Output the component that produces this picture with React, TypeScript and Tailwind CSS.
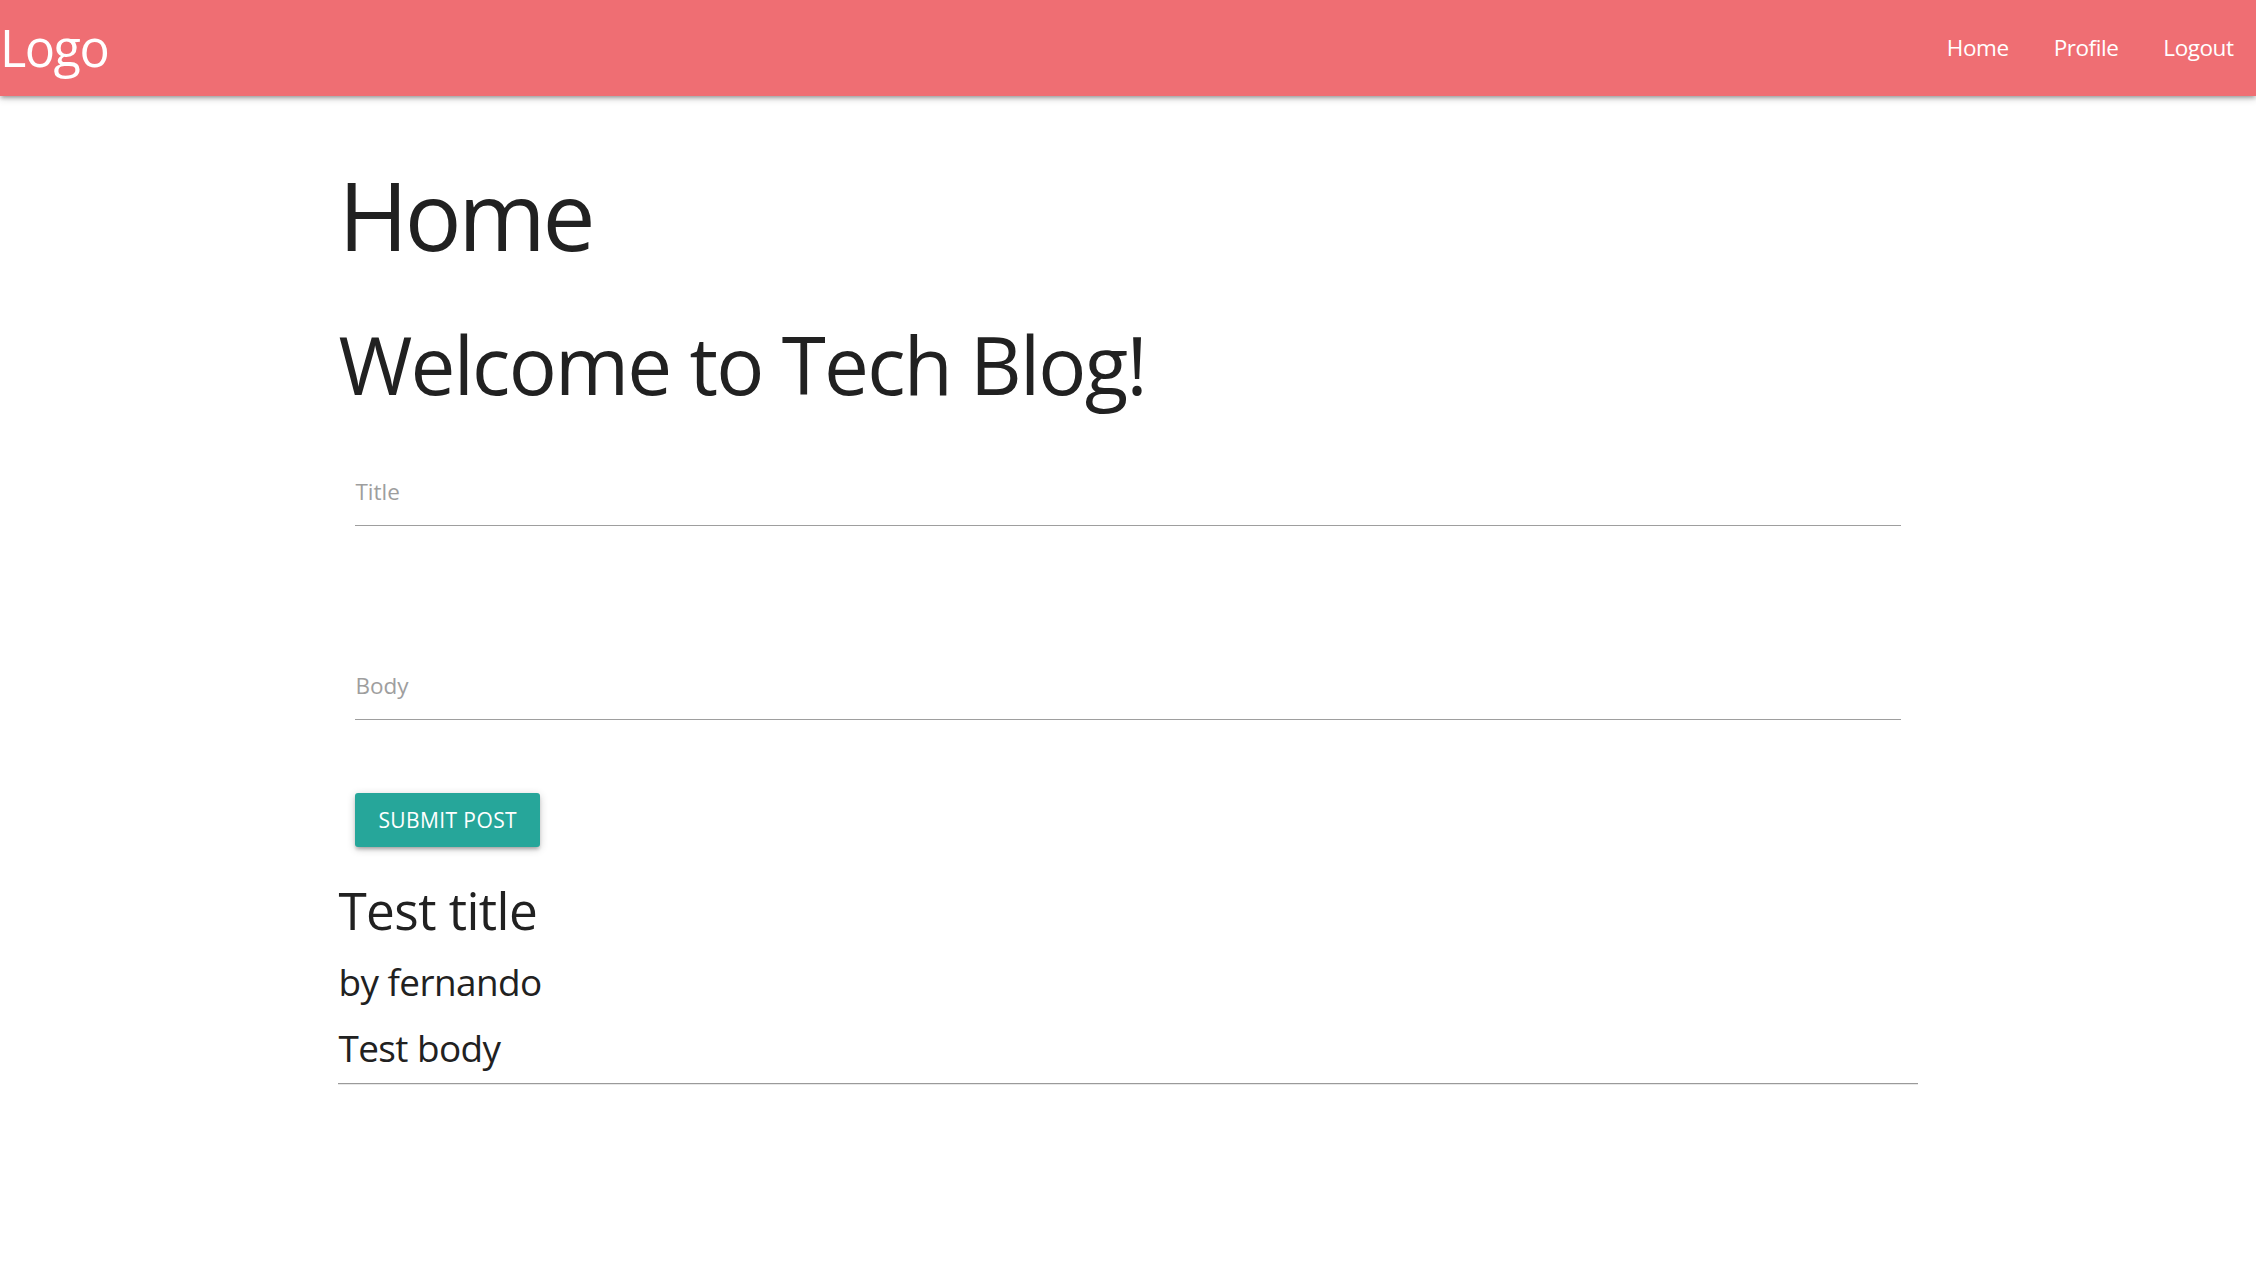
import React from 'react';

const NavLink = ({ label }: { label: string }) => (
  <a href="#" className="block px-[22.5px] text-[22.5px] tracking-[-0.02em] text-white">
    {label}
  </a>
);

const Post = ({ title, author, body }: { title: string; author: string; body: string }) => (
  <div className="tracking-[-0.035em]">
    <h4 className="mt-[35px] text-[51.3px] leading-[1.1]">{title}</h4>
    <h5 className="mt-[23.4px] text-[36.9px] leading-[1.1]">by {author}</h5>
    <h5 className="mt-[25.4px] text-[36.9px] leading-[1.1]">{body}</h5>
    <hr className="mt-[14px] border-0 border-t border-b border-t-[#9a9a9a] border-b-[#e8e8e8]" />
  </div>
);

export default function App() {
  return (
    <div className="min-h-screen bg-white font-['Open_Sans',sans-serif] text-[#212121]">
      <nav className="flex h-[96px] items-center justify-between bg-[#ef6e73] leading-[96px] shadow-[0_3px_3px_0_rgba(0,0,0,0.14),0_4px_2px_-3px_rgba(0,0,0,0.12),0_2px_8px_0_rgba(0,0,0,0.2)]">
        <a href="#" className="text-[50.4px] tracking-[-0.03em] text-white">
          Logo
        </a>
        <div className="flex">
          <NavLink label="Home" />
          <NavLink label="Profile" />
          <NavLink label="Logout" />
        </div>
      </nav>

      <main className="mx-auto w-[70%]">
        <h1 className="mt-[67px] text-[94.5px] leading-[1.1] tracking-[-0.035em]">Home</h1>
        <h2 className="mt-[53.4px] text-[80px] leading-[1.1] tracking-[-0.022em]">Welcome to Tech Blog!</h2>

        <form className="px-[17px]" onSubmit={(e) => e.preventDefault()}>
          <input
            type="text"
            placeholder="Title"
            className="mt-[50px] block h-[68px] w-full border-b border-[#9e9e9e] text-[22.5px] outline-none placeholder:text-[#9e9e9e]"
          />
          <input
            type="text"
            placeholder="Body"
            className="mt-[126px] block h-[68px] w-full border-b border-[#9e9e9e] text-[22.5px] outline-none placeholder:text-[#9e9e9e]"
          />
          <button
            type="submit"
            className="mt-[73px] flex h-[54px] items-center justify-center rounded-[3px] bg-[#26a69a] px-[23px] text-[21px] tracking-[0.4px] text-white uppercase shadow-[0_3px_3px_0_rgba(0,0,0,0.14),0_4px_2px_-3px_rgba(0,0,0,0.12),0_2px_8px_0_rgba(0,0,0,0.2)]"
          >
            Submit post
          </button>
        </form>

        <Post title="Test title" author="fernando" body="Test body" />
      </main>
    </div>
  );
}
